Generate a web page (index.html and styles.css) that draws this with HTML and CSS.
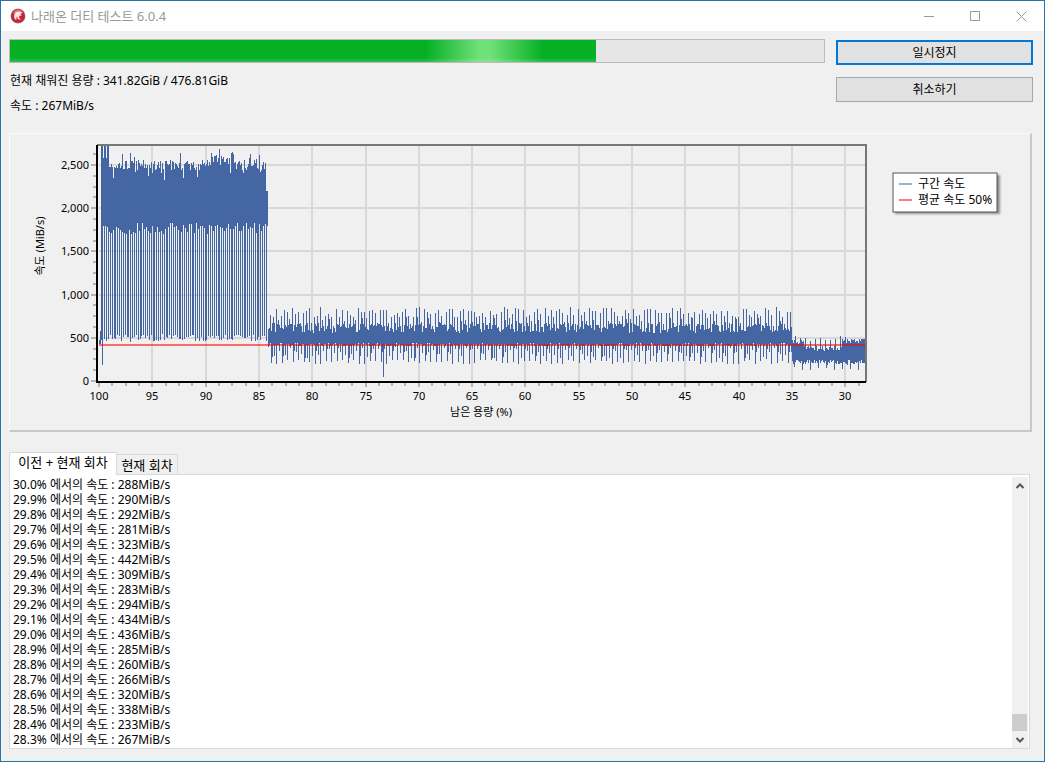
FILE: index.html
```
<!DOCTYPE html>
<html lang="ko">
  <head>
    <meta charset="UTF-8" />
    <meta name="viewport" content="width=device-width, initial-scale=1.0" />
    <title>나래온 더티 테스트 6.0.4</title>
    <link rel="stylesheet" href="styles.css">
  </head>
  <body>
    <header class="titlebar">
      <svg class="app-icon" width="16" height="16" viewBox="0 0 16 16">
        <circle cx="8" cy="8" r="7.5" fill="#8d8787" />
        <circle cx="8" cy="8" r="6.8" fill="#cf2030" />
        <path d="M2.500 6 Q4 2 8 1.600 Q12 2 13 5 Q8 3 2.500 6Z" fill="#e56a72" />
        <path d="M4 8.500 Q4 4 8.500 3.500 Q11.500 3.500 12.500 5.500 L10.500 5.500 L11.500 8 L9.500 7.500 L9 9.500 L11 12 L8 11 L7 8.500 Q6 9 6.500 12 Q4 11 4 8.500Z" fill="#fbe9ea" />
      </svg>
      <h1>나래온 더티 테스트 6.0.4</h1>
      <div class="window-buttons">
        <button aria-label="최소화"><svg width="11" height="11"><path d="M0 5.500H10" /></svg></button>
        <button aria-label="최대화"><svg width="11" height="11"><path d="M.5 .5H9.500V9.500H.5Z" /></svg></button>
        <button aria-label="닫기"><svg width="11" height="11"><path d="M.5 .5L10.500 10.500M10.500 .5L.5 10.500" /></svg></button>
      </div>
    </header>

    <main>
      <section class="status">
        <div class="progress-info">
          <div class="progress" role="progressbar" aria-label="진행률" aria-valuenow="72" aria-valuemin="0" aria-valuemax="100">
            <div class="bar" style="width: 72%"></div>
          </div>
          <p>현재 채워진 용량 : 341.82GiB / 476.81GiB</p>
          <p>속도 : 267MiB/s</p>
        </div>
        <div class="actions">
          <button class="default">일시정지</button>
          <button>취소하기</button>
        </div>
      </section>

      <section class="chart-panel">
        <svg id="chart" viewBox="0 0 1020 296">
          <g id="grid"></g>
          <path id="speed" />
          <path id="average" d="M89 211H855" />
          <path class="frame" d="M87 11H856V248" />
          <path class="axis" d="M87 11V248H856" />
          <g id="labels"></g>
          <text x="471" y="282" text-anchor="middle">남은 용량 (%)</text>
          <text transform="translate(34 112) rotate(-90)" text-anchor="middle">속도 (MiB/s)</text>
          <g class="legend">
            <rect class="legend-shadow" x="885" y="41" width="105" height="39" />
            <rect class="legend-box" x="883" y="39" width="104" height="39" />
            <path class="key-speed" d="M889 50H902" />
            <path class="key-average" d="M889 66H902" />
            <text x="908" y="54">구간 속도</text>
            <text x="908" y="70">평균 속도 50%</text>
          </g>
        </svg>
      </section>

      <section class="log">
        <div class="tabs" role="tablist">
          <button role="tab" aria-selected="true">이전 + 현재 회차</button>
          <button role="tab" aria-selected="false">현재 회차</button>
        </div>
        <div class="log-box">
          <textarea aria-label="속도 기록" readonly>
30.0% 에서의 속도 : 288MiB/s
29.9% 에서의 속도 : 290MiB/s
29.8% 에서의 속도 : 292MiB/s
29.7% 에서의 속도 : 281MiB/s
29.6% 에서의 속도 : 323MiB/s
29.5% 에서의 속도 : 442MiB/s
29.4% 에서의 속도 : 309MiB/s
29.3% 에서의 속도 : 283MiB/s
29.2% 에서의 속도 : 294MiB/s
29.1% 에서의 속도 : 434MiB/s
29.0% 에서의 속도 : 436MiB/s
28.9% 에서의 속도 : 285MiB/s
28.8% 에서의 속도 : 260MiB/s
28.7% 에서의 속도 : 266MiB/s
28.6% 에서의 속도 : 320MiB/s
28.5% 에서의 속도 : 338MiB/s
28.4% 에서의 속도 : 233MiB/s
28.3% 에서의 속도 : 267MiB/s</textarea>
          <div class="scrollbar">
            <svg width="16" height="17"><path d="M4.500 11L8 7.500L11.500 11" /></svg>
            <div class="thumb"></div>
            <svg width="16" height="17"><path d="M4.500 7L8 10.500L11.500 7" /></svg>
          </div>
        </div>
      </section>
    </main>
    <script src="script.js"></script>
  </body>
</html>
```
FILE: styles.css
```
* {
  box-sizing: border-box;
}
body {
  margin: 0;
  min-height: 100vh;
  display: flex;
  flex-direction: column;
  border: 1px solid #2874a6;
  background: #f0f0f0;
  color: #000;
  font-family: "Noto Sans", "Noto Sans CJK KR", sans-serif;
  font-size: 12px;
}
button {
  font: inherit;
  color: inherit;
  padding: 0;
}

/* 제목 표시줄 */
.titlebar {
  display: flex;
  align-items: center;
  height: 30px;
  padding-left: 9px;
  background: #fff;
}
.titlebar h1 {
  flex: 1;
  margin: 0 0 0 5px;
  font-size: 13px;
  font-weight: normal;
  line-height: 18px;
  color: #999;
}
.window-buttons {
  display: flex;
}
.window-buttons button {
  display: flex;
  align-items: center;
  justify-content: center;
  width: 46px;
  height: 30px;
  border: none;
  background: none;
}
.window-buttons path {
  fill: none;
  stroke: #999;
}

main {
  flex: 1;
  display: flex;
  flex-direction: column;
  padding: 8px 11px 12px 8px;
}

/* 진행 상황 */
.status {
  display: flex;
  gap: 11px;
}
.progress-info {
  flex: 1;
}
.progress {
  height: 24px;
  margin-bottom: 5px;
  border: 1px solid #bcbcbc;
  background: #e6e6e6;
}
.bar {
  height: 100%;
  background:
    linear-gradient(to top, rgba(255, 255, 255, 0.18), transparent 4px),
    linear-gradient(to right, transparent 71%, #70e078 80%, #70e078 82%, transparent 91%),
    #06b025;
}
.progress-info p {
  margin: 0;
  padding-left: 1px;
  line-height: 25px;
}
.actions {
  display: flex;
  flex-direction: column;
  gap: 12px;
  width: 197px;
  padding-top: 1px;
}
.actions button {
  height: 25px;
  border: 1px solid #a0a8b0;
  background: #e1e1e1;
  line-height: 18px;
}
.actions .default {
  border: 2px solid #0078d7;
}

/* 그래프 */
.chart-panel {
  margin: 15px 1px 20px 0;
  border: 1px solid #fbfbfb;
  border-right: 2px solid #c8c8c8;
  border-bottom: 2px solid #c8c8c8;
}
#chart {
  display: block;
  width: 100%;
  font-size: 11px;
}
#chart path {
  fill: none;
  stroke-width: 2;
  shape-rendering: crispEdges;
}
#chart .grid-line {
  stroke: #d8d8d8;
}
#chart .tick {
  stroke: #b4b4b4;
}
#chart .frame {
  stroke: #777;
}
#chart .axis {
  stroke: #000;
}
#chart #speed {
  stroke: #4466a3;
  stroke-width: 1;
}
#chart #average {
  stroke: #ff0000;
  stroke-opacity: 0.55;
}
.legend {
  font-size: 12px;
}
.legend-shadow {
  fill: #000;
  opacity: 0.4;
  filter: blur(1px);
}
.legend-box {
  fill: #fff;
  stroke: #555;
}
#chart .key-speed {
  stroke: #a0b0d2;
}
#chart .key-average {
  stroke: #ff7c7c;
}

/* 기록 */
.log {
  flex: 1;
  display: flex;
  flex-direction: column;
  margin-right: 3px;
}
.tabs {
  display: flex;
  align-items: flex-end;
}
.tabs button {
  width: 61px;
  height: 20px;
  border: 1px solid #d9d9d9;
  border-left: none;
  border-bottom: none;
  background: #f0f0f0;
  font-size: 13px;
  line-height: 18px;
}
.tabs button[aria-selected="true"] {
  z-index: 1;
  width: 108px;
  height: 23px;
  margin-bottom: -1px;
  padding-bottom: 4px;
  border-left: 1px solid #d9d9d9;
  background: #fff;
}
.log-box {
  flex: 1;
  display: flex;
  border: 1px solid #dadada;
  background: #fff;
}
textarea {
  flex: 1;
  padding: 2px 3px 0;
  border: none;
  outline: none;
  resize: none;
  overflow: hidden;
  background: #fff;
  font: inherit;
  line-height: 15px;
}
.scrollbar {
  display: flex;
  flex-direction: column;
  width: 16px;
  margin: 2px 1px 0 0;
  background: #f0f0f0;
}
.scrollbar path {
  fill: none;
  stroke: #555;
  stroke-width: 2;
}
.thumb {
  width: 15px;
  height: 17px;
  margin-top: auto;
  background: #cdcdcd;
}
```
FILE: script.js
```
const plot = { left: 89, right: 855, top: 12, bottom: 247 };
const pxPerPercent = 10.66;
const pxPerSpeed = 0.0864;

const toX = (percent) => Math.round(plot.left + (100 - percent) * pxPerPercent);
const toY = (speed) => Math.round(plot.bottom - speed * pxPerSpeed);

let seed = 7;
function random() {
  seed = (seed * 16807) % 2147483647;
  return seed / 2147483647;
}

// 눈금선과 눈금
let grid = "";
let ticks = "";
let labels = "";
for (let percent = 100; percent > 28.5; percent -= 1.25) {
  const x = toX(percent);
  const major = percent % 5 === 0;
  ticks += `M${x} 249V${major ? 253 : 252}`;
  if (major) {
    if (percent < 100) grid += `M${x} ${plot.top}V${plot.bottom}`;
    labels += `<text x="${x}" y="266" text-anchor="middle">${percent}</text>`;
  }
}
for (let speed = 0; speed < 2700; speed += 125) {
  const y = toY(speed);
  const major = speed % 500 === 0;
  ticks += `M${major ? 81 : 83} ${y}H86`;
  if (major) {
    if (speed > 0) grid += `M${plot.left} ${y}H${plot.right}`;
    labels += `<text x="79" y="${y + 4}" text-anchor="end">${speed.toLocaleString("en-US")}</text>`;
  }
}
document.getElementById("grid").innerHTML =
  `<path class="grid-line" d="${grid}" /><path class="tick" d="${ticks}" />`;
document.getElementById("labels").innerHTML = labels;

// 픽셀 열마다 최고 속도와 최저 속도를 잇는다
function range(x) {
  if (x < 91) return [680 - (91 - x) * 100, 430];
  if (x < 258) {
    let high = 2440 + random() * 120;
    if (random() < 0.13) high += 90;
    if (random() < 0.1) high -= 110;
    if (x > 195 && x < 225) high += 60;
    if (x < 99) high = x % 3 === 0 ? 2580 : 2720;
    if (x > 255) high = 2200;
    if (x === 92) return [high, 180];
    const gap = [1, 3, 5, 7, 9, 11].includes((x - 92) % 13);
    const low = gap ? 1700 + random() * 130 : 455 + random() * 85;
    return [high, low];
  }
  if (x < 782) {
    let high = 560 + random() * 110;
    let low = 440 - random() * 40;
    const step = (x - 258) % 11;
    if (step === 2 || step === 5 || step === 8) high = 740 + random() * 115;
    if (step === 6 || step === 10) high = 620 + random() * 130;
    if (step === 3 || step === 8) low = 190 + random() * 60;
    if (step === 0 || step === 4 || step === 6) low = 260 + random() * 130;
    if (x === 373) low = 50;
    return [high, low];
  }
  let high = (x < 794 || x > 831 ? 430 : 350) + random() * 60;
  let low = 250 - random() * 60;
  if (x % 5 === 0) high = 440 + random() * 110;
  if (x % 8 === 0) low = 120 + random() * 40;
  return [high, low];
}

let line = "";
for (let x = plot.left; x < plot.right; x++) {
  const [high, low] = range(x);
  line += `M${x + 0.5} ${toY(high)}V${toY(low)}`;
}
document.getElementById("speed").setAttribute("d", line);
```
